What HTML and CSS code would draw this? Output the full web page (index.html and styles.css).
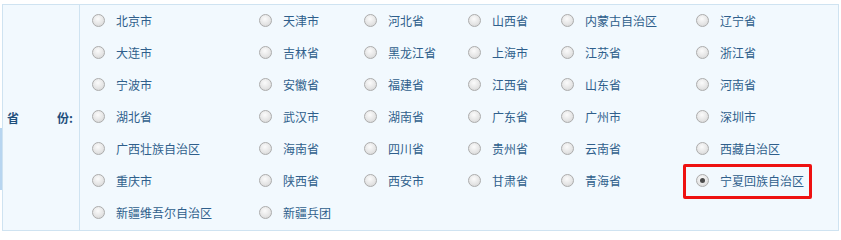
FILE: index.html
```html
<!DOCTYPE html>
<html lang="zh-CN">
<head>
<meta charset="utf-8">
<title>省份选择</title>
<link rel="stylesheet" href="styles.css">
</head>
<body>
<span class="edge-mark"></span>
<div class="wrap">
  <div class="form-row">
    <div class="label-cell"><span>省</span><span>份:</span></div>
    <div class="options">
      <label class="opt"><span class="radio"></span>北京市</label>
      <label class="opt"><span class="radio"></span>天津市</label>
      <label class="opt"><span class="radio"></span>河北省</label>
      <label class="opt"><span class="radio"></span>山西省</label>
      <label class="opt"><span class="radio"></span>内蒙古自治区</label>
      <label class="opt"><span class="radio"></span>辽宁省</label>

      <label class="opt"><span class="radio"></span>大连市</label>
      <label class="opt"><span class="radio"></span>吉林省</label>
      <label class="opt"><span class="radio"></span>黑龙江省</label>
      <label class="opt"><span class="radio"></span>上海市</label>
      <label class="opt"><span class="radio"></span>江苏省</label>
      <label class="opt"><span class="radio"></span>浙江省</label>

      <label class="opt"><span class="radio"></span>宁波市</label>
      <label class="opt"><span class="radio"></span>安徽省</label>
      <label class="opt"><span class="radio"></span>福建省</label>
      <label class="opt"><span class="radio"></span>江西省</label>
      <label class="opt"><span class="radio"></span>山东省</label>
      <label class="opt"><span class="radio"></span>河南省</label>

      <label class="opt"><span class="radio"></span>湖北省</label>
      <label class="opt"><span class="radio"></span>武汉市</label>
      <label class="opt"><span class="radio"></span>湖南省</label>
      <label class="opt"><span class="radio"></span>广东省</label>
      <label class="opt"><span class="radio"></span>广州市</label>
      <label class="opt"><span class="radio"></span>深圳市</label>

      <label class="opt"><span class="radio"></span>广西壮族自治区</label>
      <label class="opt"><span class="radio"></span>海南省</label>
      <label class="opt"><span class="radio"></span>四川省</label>
      <label class="opt"><span class="radio"></span>贵州省</label>
      <label class="opt"><span class="radio"></span>云南省</label>
      <label class="opt"><span class="radio"></span>西藏自治区</label>

      <label class="opt"><span class="radio"></span>重庆市</label>
      <label class="opt"><span class="radio"></span>陕西省</label>
      <label class="opt"><span class="radio"></span>西安市</label>
      <label class="opt"><span class="radio"></span>甘肃省</label>
      <label class="opt"><span class="radio"></span>青海省</label>
      <label class="opt selected"><span class="radio checked"></span>宁夏回族自治区</label>

      <label class="opt"><span class="radio"></span>新疆维吾尔自治区</label>
      <label class="opt"><span class="radio"></span>新疆兵团</label>
    </div>
  </div>
</div>
</body>
</html>
```

FILE: styles.css
```css
html, body {
  margin: 0;
  padding: 0;
  background: #ffffff;
}

body {
  font-family: "Noto Sans CJK SC", "Noto Sans", sans-serif;
  font-size: 12px;
  position: relative;
}

.edge-mark {
  position: absolute;
  left: 0;
  top: 128px;
  width: 2px;
  height: 62px;
  background: #b7d5f0;
}

.wrap {
  padding: 4px 0 0 2px;
}

.form-row {
  display: flex;
  width: 835px;
  height: 225px;
  border: 1px solid #cfe3f1;
  background: #f2f9fe;
}

.label-cell {
  width: 66px;
  flex: none;
  border-right: 1px solid #cfe3f1;
  display: flex;
  align-items: center;
  justify-content: space-between;
  padding: 0 6px 0 4px;
  color: #1f4f7c;
  font-weight: bold;
  font-size: 12px;
}

.options {
  flex: 1;
  display: grid;
  grid-template-columns: 167px 105px 104px 93px 135px 1fr;
  grid-auto-rows: 32px;
  padding: 0 0 1px 12px;
  align-content: start;
}

.opt {
  display: flex;
  align-items: center;
  color: #2f5f8c;
  white-space: nowrap;
  line-height: 12px;
}

.radio {
  width: 11px;
  height: 11px;
  border: 1px solid #acacac;
  border-radius: 50%;
  background: radial-gradient(circle at 45% 35%, #fbfbfb 0%, #e6e6e6 55%, #d0d0d0 100%);
  margin-right: 11px;
  flex: none;
  position: relative;
  top: -1px;
}

.radio.checked::after {
  content: "";
  position: absolute;
  left: 3px;
  top: 3px;
  width: 5px;
  height: 5px;
  border-radius: 50%;
  background: #4a4a4a;
}

.selected {
  position: relative;
}

.selected::after {
  content: "";
  position: absolute;
  left: -13px;
  top: -1px;
  width: 123px;
  height: 29px;
  border: 3px solid #ee1111;
  border-radius: 2px;
}
```
